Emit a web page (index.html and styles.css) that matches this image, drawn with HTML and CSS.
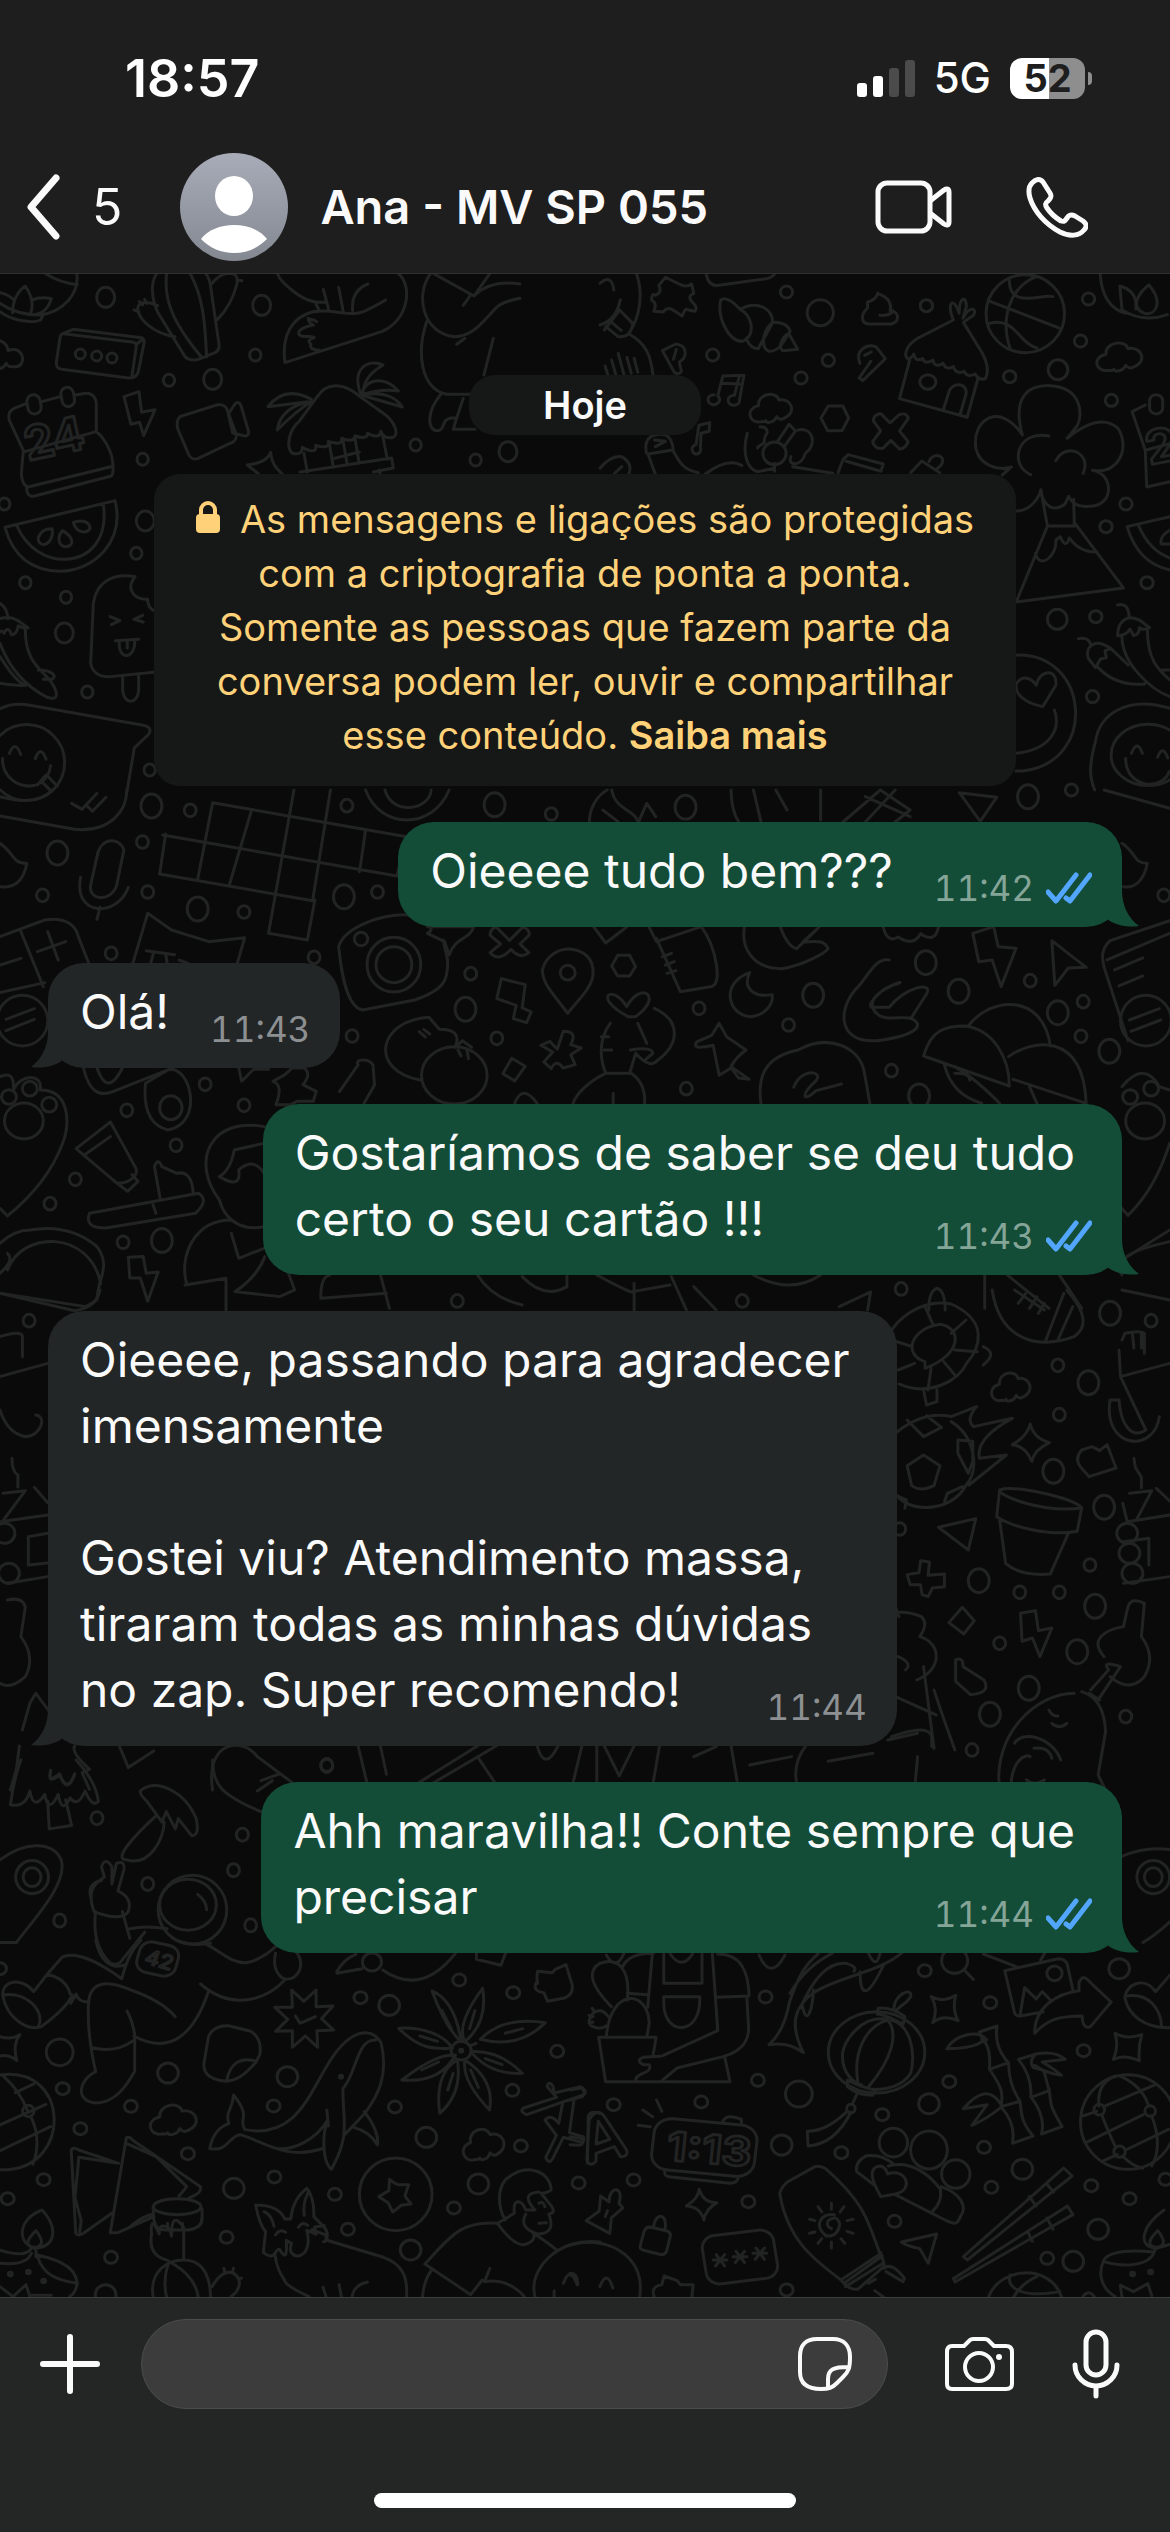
FILE: index.html
```html
<!DOCTYPE html>
<html lang="pt-BR">
<head>
<meta charset="utf-8">
<meta name="viewport" content="width=device-width, initial-scale=1">
<title>Ana - MV SP 055</title>
<link rel="stylesheet" href="styles.css">
</head>
<body>
<header class="top">
  <div class="status">
    <time class="clock">18:57</time>
    <div class="status-icons">
      <svg class="signal" width="58" height="37" viewBox="0 0 58 37" aria-hidden="true">
        <rect x="0" y="23" width="10" height="14" rx="3" fill="#fff"/>
        <rect x="16" y="16" width="10" height="21" rx="3" fill="#fff"/>
        <rect x="32" y="8" width="10" height="29" rx="3" fill="#4b4b4b"/>
        <rect x="48" y="0" width="10" height="37" rx="3" fill="#4b4b4b"/>
      </svg>
      <span class="network">5G</span>
      <span class="battery"><span class="battery-level">52</span></span>
    </div>
  </div>
  <nav class="chat-bar">
    <a class="back" href="#chats" aria-label="Voltar">
      <svg width="34" height="66" viewBox="0 0 34 66" aria-hidden="true"><path d="M30 4 5 33l25 29" fill="none" stroke="#fafafa" stroke-width="7" stroke-linecap="round" stroke-linejoin="round"/></svg>
      <span class="unread">5</span>
    </a>
    <a class="contact" href="#contact">
      <svg class="avatar" width="108" height="108" viewBox="0 0 108 108" aria-hidden="true">
        <defs><linearGradient id="av" x1="0" y1="0" x2="0" y2="1"><stop offset="0" stop-color="#a8acb8"/><stop offset="1" stop-color="#848891"/></linearGradient></defs>
        <circle cx="54" cy="54" r="54" fill="url(#av)"/>
        <ellipse cx="54" cy="43" rx="19" ry="20" fill="#fff"/>
        <path d="M21 86C28 77 40 72 54 72s26 5 33 14c-9 9-20 14-33 14S30 95 21 86z" fill="#fff"/>
      </svg>
      <h1 class="contact-name">Ana - MV SP 055</h1>
    </a>
    <div class="calls">
      <button class="icon-btn" type="button" aria-label="Chamada de vídeo">
        <svg width="78" height="54" viewBox="0 0 78 54" fill="none" stroke="#fafafa" stroke-width="5" stroke-linejoin="round"><rect x="3" y="3" width="52" height="48" rx="9"/><path d="M55 21 69 10c3-2 5-1 5 2v30c0 3-2 4-5 2L55 33"/></svg>
      </button>
      <button class="icon-btn" type="button" aria-label="Chamada de voz">
        <svg width="62" height="62" viewBox="0 0 62 62" fill="none" stroke="#fafafa" stroke-width="5" stroke-linejoin="round"><path d="M6 7C10 3 14 2 17 6L24 17c2 3 1 5-2 8-3 2-3 4-1 7 4 6 9 10 14 13 3 1 4 0 6-3 2-3 4-4 8-2l8 5c4 3 4 6 1 9-5 6-14 7-24 2C19 48 8 35 4 22 2 15 3 10 6 7z"/></svg>
      </button>
    </div>
  </nav>
</header>

<main class="chat">
  <svg class="doodles" viewBox="0 274 1170 2023" preserveAspectRatio="xMidYMin slice" aria-hidden="true">
    <defs>
      <ellipse id="s" rx="17" ry="18"/>
      <ellipse id="l" rx="27" ry="30"/>
      <ellipse id="m" rx="8" ry="19"/>
      <ellipse id="n" rx="14" ry="36"/>
      <path id="bolt" d="M0 15 45 0l8 62 40-8-34 78-12-40-26 6z"/>
      <path id="cloud" d="M32 93c-30 8-45-38-6-48C22 10 74-2 82 28c35-8 52 40 12 56-5 5-15 0-18-6-8 20-28 20-30 12 0 2-6 4-14 3z"/>
    </defs>
    <g transform="translate(0 270) scale(.3333)">
      <use href="#l" x="317" y="82"/><use href="#l" x="785" y="106"/><use href="#l" x="638" y="328"/><use href="#l" x="436" y="753"/><use href="#l" x="193" y="1089"/><use href="#l" x="1524" y="545"/>
      <use href="#s" x="507" y="331"/><use href="#s" x="766" y="255"/><use href="#s" x="428" y="568"/><use href="#s" x="13" y="702"/><use href="#s" x="409" y="850"/><use href="#s" x="76" y="938"/><use href="#s" x="198" y="982"/><use href="#s" x="262" y="1266"/><use href="#s" x="449" y="1500"/><use href="#s" x="1247" y="525"/><use href="#s" x="1427" y="570"/>
      <path d="M230 10c10 60-40 115-110 125q-70 0-120-35M0 125c40 30 100 35 122 25l8-16M135 10c30 20 60 30 97 34M38 128c0-30 10-60 38-80 20 30 25 60 15 85M0 68q25 5 40 20M96 90c20-8 40-8 58-4-8 30-30 50-60 48"/>
      <path d="M190 190 220 178 425 203c10 5 8 15 6 22l-15 75c-3 20-15 25-30 24L185 298c-14-2-17-12-16-22l11-72c2-12 6-14 16-12l200 24c14 2 14 10 12 20l-12 82M410 222l18-14"/>
      <circle cx="241" cy="252" r="15"/><circle cx="290" cy="258" r="15"/><circle cx="336" cy="264" r="15"/>
      <path d="M0 212q22 8 24 30c50-20 60 55 15 48-10 2-20-4-20-10q-6 12-19 16"/>
      <path d="M470 10c-20 30-15 80 5 120l80 130c10 10 25 12 40 8l50-20c10-5 14-12 12-26L632 50q-3-25-15-40M500 10c-10 80 20 150 105 252M570 10c45 80 45 170 50 250M635 42q20-28 50-32c25 0 30 12 25 35-10 40-35 80-58 104M525 200c-60-8-110-50-112-85 4-22 30-22 60-8M402 120l14 6M418 95l10 10M434 88l6 12M714 30l12 2"/>
      <path d="M832 10q5 15 18 27c30 30 70 60 110 60h18M1195 10c45 40 30 140-50 175L855 278c-15-110 50-155 110-155 60 0 100 20 140-5 30-15 40-20 52-28M970 58l16 60M1016 52l14 74M1058 122c-4-50 20-70 46-80M948 102l10 20M950 155c-10-8-20-5-25-10M925 145c0 10 5 15 15 20-25 5-50 15-42 30 15 10 30 0 45 8-15 5-22 10-10 20-5 10 5 18 25 18"/>
      <path d="M1292 10c-50 70-20 180 70 190 60 0 90-50 130-90 20-15 40-20 68-25M1300 10l122 68 48-68M1422 78q50-50 138-36M1410 78l-20 28M1395 205l-25 18M1280 155c-30 90-20 200 60 218h90M1480 205l-28 110M1325 370c-50 60-40 110-15 112 30 0 10-35 45-38h15l-10 34h65l-25 0M1390 385l-22 66"/>
      <path d="M1000 348c30-5 55 10 80 32l70 50c30 20 50 60 30 72-20 5-35-5-37-18q0 25-40 6 0 20-38 8 0 20-40 8 5 22-40 8 5 25-38 12 5 30-40 6 0 25-30 18c-20-20-10-70 20-95l55-75q20-30 48-32zM912 550l10 56M988 520l12 72M1028 505l14 80M1064 500l14 80M1148 496l14 72M1000 566l78-20M900 606l275-42 5 30-60 12M1138 600l2 12M804 410q50-65 130-22M804 410l132-16M832 480q10-70 104-86M832 480q60-60 104-86M1083 375c-30-80 20-110 66-90-50 30-60 60-60 90M1083 375c20-60 80-50 112-12M1083 375q60-20 112-12M1083 375c60-10 100 0 124 36M1083 375l124 36M742 585c40-5 60-15 70-38 5 40 20 50 35 65M742 585l34 27"/>
      <path d="M80 400 42 415c-14 8-18 22-14 36l42 90-6 70q2 35 20 40l255-62c0-45-30-90-50-104v-80c0-25-15-36-32-35l-30 5M125 395l56-15M74 545l214-60M80 650q0 35 24 28l230-60q8-10 4-30"/>
      <rect x="82" y="374" width="40" height="58" rx="20" transform="rotate(-10 102 403)"/><rect x="184" y="352" width="38" height="58" rx="19" transform="rotate(-10 203 380)"/>
      <text x="84" y="572" font-size="140" transform="rotate(-12 84 572)">24</text>
      <use href="#bolt" x="372" y="365"/>
      <path d="M540 440l110-35c16-4 28 4 32 16l26 70c4 15-6 26-20 30l-95 45c-14 4-24-4-28-15l-32-75q-5-25 7-36zM685 432l20-30c8-8 14-4 18 5l22 75c4 12-6 18-15 15l-32-8z"/>
      <path d="M15 772 345 692c30 120-60 210-165 212Q50 900 15 772M50 766c30 70 90 105 150 102 70-5 125-60 110-166M116 800q10-25 40-24c5 20-5 45-25 48-10 0-20-10-15-24zM188 782c-20 20-10 48 8 48 25 0 30-25-8-48zM220 758c20-10 50-5 50 18-10 15-40 15-50-18z"/>
      <path d="M405 920c-60-10-115 10-125 80l-8 180c5 30 30 42 60 40l135-14M405 920c-30 40 0 70 38 68 0 20 8 32 24 36M368 1222v40c5 45 45 40 48 0v-48M330 1040l30 12-26 12M428 1036l-26 12 28 8M346 1112l70-4M358 1114c-5 60 50 55 46-4M382 1114v20"/>
      <path d="M0 1000q22 15 24 46M0 1046c40-12 60 10 84 28-15 6-20-6-30-6 0 18-12 28-20 26-6-20-15-20-22-4-4-8-8-8-12-4M76 1080c0 110 60 120 85 168 20 40 0 40-20 34C80 1250 30 1200 0 1120M0 1160q50 80 78 86-30 2-78-6M115 1200c40 0 60 20 40 28h-25"/>
      <path d="M0 1316q40-20 90-10l340 60c20 4 25 15 15 28l-42 40-22 130"/><circle cx="80" cy="1478" r="114"/><path d="M28 1450q18-42 34 4M106 1466q16-44 32 2M8 1465c-5 90 130 120 144 22M112 1545l24-28M125 1535l30 30M140 1515l32 34"/>
    </g>
    <g transform="translate(600 270) scale(.3635 .3333)">
      <use href="#l" x="1260" y="299"/><use href="#l" x="1258" y="1048"/><ellipse cx="606" cy="128" rx="36" ry="39"/>
      <use href="#s" x="513" y="66"/><use href="#s" x="898" y="107"/><use href="#s" x="310" y="255"/><use href="#s" x="628" y="271"/><use href="#s" x="553" y="324"/><use href="#s" x="1344" y="87"/><use href="#s" x="1322" y="213"/><use href="#s" x="1127" y="320"/><use href="#s" x="1407" y="391"/><use href="#s" x="1447" y="702"/><use href="#s" x="1392" y="770"/><use href="#s" x="1505" y="938"/><use href="#s" x="1364" y="1040"/><use href="#s" x="1355" y="1280"/><use href="#s" x="1297" y="1560"/>
      <path d="M100 10c20 60 10 130-20 180M0 40q32-30 38 20M0 165q45-15 56-76M12 180l42-60M54 120l36 40q-5 45-40 40l-34-30M30 155l28 26M80 192c50 30 60 70 66 124M14 288l8 28M32 270l12 46M50 250l16 64M74 262l12 48M94 265l10 42"/>
      <path d="M180 22 218 42q20 12 34 0l6 28q-18 8-6 24 20 20 8 30l-24-6q-6 6-10 20l-22-16q-20-14-30 4l-26-2q10-25-6-34 0-22 10-14 20-8 10-30zM292 10q5 40 35 36l130-20q20-4 24-16"/>
      <path d="M385 118Q350 75 332 90c-10 50 20 125 60 124 40-20 25-80-7-96zM385 118c50-30 90 0 90 40l-40 78q-20 0-30-24M475 158c-20 10-40 70-10 86 30 0 40-30 58-60-4-20-30-30-48-26M520 190c-20 10-30 40-18 52l42-4-22-42"/>
      <path d="M172 242 208 222c30 0 36 40 10 54l6 28q-10 14-20 2zM210 238l-8 30M338 318l58-2-12 72a16 15 0 1 1-14-12l14-60M338 318l-14 60a16 15 0 1 1-10-4M336 340l48 2M272 466l30-8-2 26-22 6-2 42a12 14 0 1 1-12-8z"/>
      <path d="M764 70q-5 20-28 26v18c-20 20-18 48 4 48h60c25-4 25-38-2-40q8-35-34-52M770 136q30 2 36-14M715 280c-15-40 20-60 44-50l26 36-62 66-10-8 32-50M728 256l18-10"/>
      <path d="M972 150l-100 56c-30 20-38 50-24 62q15-10 15-16 5 25 25 14 5 20 28 4 5 26 28 10 8 22 28 10 8 25 30 14 8 20 30 8 10 20 28 14 15-30-10-80l-50-88M972 150c-20-50 0-75 16-20 0-50 20-55 20-20l-10 35c20-40 40-30 30-10l-28 22M852 270l-28 116 186 56 30-118M945 418l16-56c10-25 50-25 46 10l-16 60"/><circle cx="902" cy="336" r="22"/>
      <ellipse cx="1170" cy="131" rx="108" ry="117"/><path d="M1073 94l190 80M1200 20c-70 30-100 120-72 216M1126 30c0 90 90 40 120 50M1072 160c70-20 80 60 130 74"/>
      <use href="#cloud" transform="translate(1364 208) scale(1.08 1)"/>
      <path d="M1376 10q5 100 70 120M1430 48q50 15 44 70M1430 48l6 72q60 40 125 14M1510 45c40 50 20 90-10 86-50-20-10-70 10-86"/>
      <path d="M1162 495c-30-120 20-150 76-148 90 5 90 90 75 120l-28 38q90-80 140-30c35 60 0 140-70 126 60 10 60 110-10 108q-40 5-56-30l-10 24q-40 30-62-20l-4-24c-10 40-40 65-68 64M1162 495c-60-100-140-50-128 40 10 50 60 70 98 56l-25 24M1235 498c-90-20-110 90-50 116M1254 572c30-60 100-20 75 38M1213 662l18 106h74l-2-80M1231 768l-86 228 295-42-135-196M1198 850c10 50 60 10 56-40l12-10q16 40 25 4 30 45 76 42"/>
      <use href="#cloud" transform="translate(410 362)"/><ellipse cx="480" cy="550" rx="32" ry="34"/><path d="M488 515l32-52 18 20-32 48M545 480c45-10 50 50 20 70-10 40-50 40-40 10M440 470q20 0 20 18-10 15-8 30-22 15-18 16M405 490c-15 60 0 110 30 115l45-10M480 580v24M530 590l110 20M128 550c-10-50 20-60 50-56 20 8 24 40 22 46l-68 12 20 60M200 540c20 40 30 60 70 68M290 612q60-50 100-26M150 510l30 4-28 16M0 595q30-40 60-35 30 20 20 50M60 590l-20 20"/>
      <path d="M628 408h40l16 36-18 38h-40l-18-38zM762 435q10-8 16 2l20 22 24-24q20-10 26 10l-24 38 24 32q-8 22-24 22l-24-26-22 24q-22 4-28-20l22-32-20-30q2-18 10-18zM655 608l14-40 14-14 96 28-6 22-96-30M855 608l30-35 50 35M905 575c10-30 50-20 34 10l-12 12"/>
      <path d="M1500 405l-36 20 36 116 4 110 64-16M1500 541l68-20"/><rect x="1512" y="374" width="36" height="58" rx="18"/><text x="1512" y="585" font-size="140" transform="rotate(-12 1512 585)">2</text>
      <path d="M1568 740l-118 30q30 110 118 130M1482 768q30 75 86 96M1568 780q-30 20-24 42h24M1424 1005q30-10 32 38M1456 1043c30 0 40 20 56 30q-20 10-28 0 0 20-16 24l-10-20q-10 20-34 20 0-44 32-54M1436 1100c0 80 80 160 132 180M1506 1080c0 90 30 120 62 150M1316 1106q28-6 34 18M1405 1135c-50-35-70 0-62 30l20 28 14-26 16-4-4-20zM1368 1190q50 60 130 52M1405 1135l48 50M1546 1200h22"/>
      <path d="M1144 1155c200-10 230 320 20 348h-20M1145 1450c90-10 125-70 105-130M1218 1310c-50-10-80-40-72-70 20-30 45-10 54 6 10-50 60-50 54 0z"/>
      <path d="M1568 1315c-120-40-195 20-205 100-20 80-15 110-2 145"/><ellipse cx="1508" cy="1455" rx="102" ry="92"/><path d="M1462 1450q16-44 30 0M1534 1462q14-40 28 2M1446 1465c0 90 100 100 120 40"/>
    </g>
    <g transform="translate(0 790) scale(.746 .3333)">
      <use href="#n" x="203" y="48"/><use href="#n" x="77" y="189"/><use href="#n" x="265" y="357"/><use href="#n" x="461" y="320"/><use href="#n" x="663" y="44"/><use href="#n" x="624" y="658"/><use href="#n" x="1241" y="518"/><use href="#n" x="1285" y="604"/><use href="#n" x="1090" y="616"/><use href="#n" x="1418" y="668"/><use href="#n" x="1487" y="784"/><use href="#n" x="1232" y="918"/><use href="#n" x="919" y="52"/><use href="#n" x="1378" y="20"/><use href="#n" x="217" y="1352"/>
      <use href="#m" x="255" y="61"/><use href="#m" x="465" y="47"/><use href="#m" x="191" y="156"/><use href="#m" x="57" y="316"/><use href="#m" x="198" y="306"/><use href="#m" x="327" y="366"/><use href="#m" x="506" y="306"/><use href="#m" x="149" y="490"/><use href="#m" x="421" y="502"/><use href="#m" x="631" y="551"/><use href="#m" x="666" y="745"/><use href="#m" x="472" y="738"/><use href="#m" x="937" y="655"/><use href="#m" x="1057" y="705"/><use href="#m" x="1195" y="842"/><use href="#m" x="920" y="896"/><use href="#m" x="1381" y="572"/><use href="#m" x="1452" y="635"/><use href="#m" x="1449" y="739"/><use href="#m" x="275" y="883"/><use href="#m" x="327" y="946"/><use href="#m" x="170" y="961"/><use href="#m" x="236" y="1066"/><use href="#m" x="101" y="1168"/><use href="#m" x="67" y="1241"/><use href="#m" x="165" y="1357"/><use href="#m" x="739" y="72"/><use href="#m" x="1560" y="316"/><use href="#m" x="613" y="1533"/><use href="#m" x="1208" y="1497"/><use href="#m" x="995" y="1533"/>
      <path d="M0 78l100 40c50 10 70-60 70-118M96 40l14 18 20-48M118 50l6 14 18-42M0 20q50 30 70-20"/>
      <path d="M285 38 545 140 532 258 218 135M222 132l-8 120 205 80 24-332M285 38l-20 230M337 62l-30 226M394 0l-34 430 52 20 10-120M490 120l-8 125"/>
      <path d="M130 200c5-60 30-60 36-20l-10 110c-10 50-40 40-34-10zM108 262c-10 120 50 120 64 30M134 352l-4 36M0 160c20 30 15 60 36 60-5 60-20 75-36 70M1504 160c20 30 15 60 34 60-5 60-20 75-32 70"/>
      <path d="M0 440l60-50c30-10 42 20 45 50l14 80M0 525l28-20M28 425l30 165M50 485l38-30M64 425l14 85M0 608l60-30"/><ellipse cx="30" cy="692" rx="34" ry="76"/><path d="M8 688l38-32M8 722l38-34M1568 392l-80 60c-14 30-10 60-8 80l32 220M1568 430l-84 80M1494 540l38-36M1500 588l32-30"/><ellipse cx="1536" cy="692" rx="34" ry="76"/><path d="M1514 690l40-34M1516 724l40-34"/>
      <path d="M178 520l20-150 32 50 50 35 48-12-10 78M196 482l38 12M206 486l-4 34M222 490l2 30M240 510l12 10M486 660c-25-10-30-150-32-190 8-60 60-100 95-95M486 660l70-30c40-30 45-60 44-120l-6-60"/><ellipse cx="528" cy="524" rx="36" ry="82"/><ellipse cx="528" cy="524" rx="24" ry="54"/><ellipse cx="484" cy="447" rx="9" ry="20"/>
      <path d="M490 0c20 120 90 120 112 0M516 0c10 80 60 60 62 0M790 96c0-40 10-80 24-96M808 60l20 34M820 0c5 60 30 60 34 90M855 100l12-60 12 40M980 0q0 60 10 95M1010 0l10 95M1040 0l15 60M1100 0v90M1130 96l50-96 40 60-20 36M1160 20l60 60M1200 0l-40 96M1286 8l50 14-22 72zM1480 0l88 55"/>
      <path d="M573 430q10-15 0-20h62c-5 40-25 30-33 85l-6-40zM665 411l18 40 18-40q10 10 8 25l-12 26 12 26q-12 22-24-10-16 40-28 10l14-26-14-26q0-20 8-25zM796 411l16 48 28-48M870 411l10 44 60-45c20 60 30 180 12 180l-40 15-32-160M888 500l12-10M892 525l12-10M894 550l12-8M998 411c-5 60 10 125 50 125 30-10 60-50 62-60-5-30-20-20-34-20l22-45M1046 411q10 60 22 65l28-60M1184 411q5 50 20 30 20 30 30-10 20 30 24-20M1304 430l28-20 6 60 24 5-20 115-12-80-18 5zM1410 452l46 80-24 2-18 52z"/>
      <path d="M761 670c-20-60-34-90-34-130 10-90 70-80 68 10 0 40-20 80-34 120z"/><ellipse cx="761" cy="548" rx="10" ry="22"/><path d="M828 496h16l8 34-8 28h-16l-8-30zM672 566l32 18-4 70 12 12-6 32-18-12 4-40-26-20zM1005 548c-40 30-30 130 2 132 20-5 30-40 28-66-25 10-40-20-30-66z"/>
      <path d="M575 682c-70 10-80 160-12 188M575 682l14 36q30 0 22 48M568 718l8 14M562 725l8 16"/><ellipse cx="609" cy="856" rx="44" ry="86"/><path d="M610 772l10-20 12 20M614 780l4 18M626 780l2 26M755 724q20 0 10 40l14 10-14 20 6 30-16 10q-10-30-16 2l-10-20 12-30-16-20 12-12 10 24zM686 805l18 24-14 44-16-22z"/>
      <path d="M842 680c-50-60-20-100-2-30 20-80 50-30 12 30l-10 0M818 700c-20 60-10 130-6 150h32l8-60q20 50 30 20c30-50 30-120-5-155M806 740h10M810 780h10M845 780q30-10 30 10l-10 20M855 700l12 60M812 850c-20 20-40 60-44 92M846 850q20 30 18 92M822 910v32"/>
      <path d="M964 700l10 40 26 40q-15 25-20 50l24 38-14-4-10-30-16 22-8-90q-30 15-22-10l20-20zM1192 510c-20-10-30 60-46 90-25 70-20 160 30 152 70-20 50-60 54-50-10-40-40 0-54-30-30-60 50-110 26-90-20 10-40 60-34 70l24 0c20-60 60-80 50-40l-20 70"/>
      <path d="M1020 940c-5-80 5-140 50-160 40-50 80-10 88 60l8 100M1064 892c10-60 40-50 30-20-20 40-20 70 0 30l34-20M1238 798c10-80 30-90 55-90 40 10 60 100 60 180zM1298 708c30-90 100-100 110 60M1352 800c30-50 100-80 104 140l-98-72M1266 825q10 90 50 115M1280 830q30 40 60 110M1300 870q0-20-20-20M1380 890l10 50"/>
      <path d="M0 860q20-20 18 40c10-50 40-50 36 0 40 0 40 100 30 160q-20 120-74 218L0 1255"/><ellipse cx="32" cy="993" rx="26" ry="54"/><ellipse cx="12" cy="921" rx="10" ry="22"/><ellipse cx="40" cy="896" rx="10" ry="22"/><ellipse cx="66" cy="944" rx="10" ry="22"/><ellipse cx="1535" cy="993" rx="26" ry="54"/><ellipse cx="1515" cy="921" rx="10" ry="22"/><ellipse cx="1543" cy="896" rx="10" ry="22"/><path d="M1504 890q30-80 50 0l14 10M1568 1060q-20 140-56 216l-8-20"/>
      <path d="M112 834q10 100 40 70l80-70M130 834q14 90 34 0M195 880q-5 120 30 140c50-20 30-200 0-180zM320 834l4 40 16-36 20 0M392 834h16q10 20-2 50l18 20-4 30-22 0-8 10h-20q10-60-4-70l16-20zM455 905l25-80c-5-20 15-20 20 0l2 60-14 55M690 940q10-60 30 0"/><ellipse cx="229" cy="953" rx="15" ry="36"/>
      <path d="M148 996l-46 80 55 104c20 0 30-30 24-50zM148 1040l-35 55M157 1180l14 24 14-30-8-20M207 1130l8 100M207 1130q5-30 10 0l20 20q20-10 22 60M120 1270l146-60q15 20-4 60l-120 44q-30 0-22-44M205 1244l4 26M354 1010c-70-30-100 100-60 220 10 80 40 90 60 80M354 1060l-40 20q-5 60-20 80 30 40 26-20 20-40 34 10M250 1480c-10-80 10-190 60-190M248 1485l55-20v95M310 1330l10 75 34-30M355 1400q-10 60-40 105l60 15 20-20-10-60"/>
      <path d="M0 1360q20-40 40-40c50-20 80 30 90 50 20 60 0 100 0 160l-15 20L0 1510M10 1440c20-120 110-120 125 40M0 1450q20-40 10-60M172 1402l20-2 4 50 16-4-14 88-10-70-14 0zM430 1520q0-60 12-65M430 1525l88-15M510 1455l12 100"/>
      <path d="M640 1455q20 70 60 90M700 1460q30 70 60 30l0-30M800 1455q50 60 48 50l50-20M850 1480l0 80M900 1460l20 100M930 1490l30 70M1010 1455q50 60 90 0M1125 1550l42-44-4 54M1245 1560q0-60 12-65 10 10 10 65M1320 1455v100M1350 1455l56 100M1420 1455l30 100M1504 1410l64-90M1504 1455q-20-60 64-100"/>
    </g>
    <g transform="translate(0 1290) scale(.746 .3333)">
      <use href="#m" x="39" y="92"/><use href="#n" x="1488" y="70"/><use href="#m" x="1543" y="92"/><use href="#m" x="1418" y="226"/><use href="#n" x="1459" y="278"/><use href="#m" x="1420" y="374"/><use href="#n" x="1412" y="544"/><use href="#m" x="1206" y="717"/><use href="#n" x="1480" y="652"/><use href="#n" x="1312" y="872"/><use href="#m" x="1461" y="825"/><use href="#m" x="1367" y="907"/><use href="#m" x="1420" y="907"/><use href="#n" x="1468" y="949"/><use href="#m" x="1340" y="1060"/><use href="#n" x="1444" y="1085"/><use href="#n" x="1379" y="1195"/><use href="#n" x="1327" y="1273"/><use href="#m" x="1509" y="1280"/><use href="#m" x="1303" y="1380"/><use href="#m" x="438" y="1425"/>
      <path d="M1195 120c20-60 50-90 80-78 50 50 40 130 20 180-10 50-50 100-90 60M1240 215c-30-20-20-100 20-112 30 10 30 90-20 132zM1195 150l28 20M1204 240l22-20M1248 235l-4 65M1265 215l15 40M1280 180l30 5M1275 130l20-40M1250 100l-10-50M1318 170q20 20 0 55M1238 300l4 45 14-10v-35"/>
      <use href="#cloud" transform="translate(1328 238) scale(.45 1)"/>
      <path d="M1330 0c10 150 60 180 110 140 25-40 5-100-10-140M1360 0l40 60M1375 10l-10 30M1390 20l-10 35M1400 40l-8 30M1402 150l24-140M1418 150l20-100"/>
      <path d="M1195 440q40-80 80-60l34-30q-15 40-4 60l52-25q-50 60-44 120l36-10-50 90M1195 585c10 90 80 90 100 0 20-50 10-150-20-190M1238 495l22 32-8 60q-18 20-30 0l-6-60zM1216 390l22 50 24-28-20-35M1284 450l20 4v60l-6 36-14-60zM1195 610l20 20-2 25M1290 590l-20 20-4 25M1381 402q5 45 26 56-20 20-24 56-8-45-26-50 20-25 24-62zM1450 480l14-10 10 12 10-18 12 70-36 26-8-20q-14-30-2-60zM1340 600l-4 80c20 30 70 60 108 44l6-70c-10-30-90-70-110-54 0 20 60 70 110 54M1340 690l8 130q20 40 60 32l24-122M1258 712l50-26-10 94zM1234 812l12 4-2 40 22-4v38l-16 4-6 26-8-6-2-30h-14l-4-30 16-6z"/>
      <path d="M1290 952l16 40-14 40-20-34zM1368 970l20-8 4 60 18-8-16 86-10-56-14 10zM1281 1110c10-10 10 10 10 20l28 40q10 40-18 44l-20-40zM1195 970q20-10 40 10 10 20-2 60c30 20 30 100-4 130M1195 920l10 60M1204 1100q20 20 10 40M1238 1130l14 245M1252 1200l12 80 16 100M1195 1215l60 60M1195 1340q50-40 54 0v30"/>
      <path d="M1440 1210c-50 0-110 120-100 290M1450 1205q30 20 32 120l-10 130 10 45M1360 1360c10-40 50-20 62 50M1355 1500c0-90 20-110 26-100M1386 1375q20-5 24 30M1376 1470q10 20 24 0M1406 1260q5 20 12 18M1410 1300q10 20 20 0M1460 1210l14 20M1462 1200l24-60q-10-30 16-10l-30 100M1480 1100c-20-50 0-80 26-90l6-60q5-30 22-10l-4 100q20 60 4 120-20 50-46 0"/>
      <path d="M1504 0l64 30M1504 150l4-20q20-10 26 0v60M1500 180l2 80 34 160c-20 30-34-20-36-90h-12c-10 150 60 160 66 50M1502 260l66-40M1518 130l2 44M1530 130v44M1520 505l2 28 8 28v32M1514 610l30-8-20 85M1505 640l6 55 57-20M1550 595l18 38M1506 755l34-10v80M1506 880l62-20"/><ellipse cx="1511" cy="730" rx="14" ry="30"/><ellipse cx="1514" cy="790" rx="14" ry="30"/><ellipse cx="1518" cy="850" rx="14" ry="30"/>
      <path d="M0 10l100 52q30-10 34-62M0 140q30-20 30 0v60M0 260l64-40M0 360q10 70 34 80c20 0 30-60 14-65M16 505q0 40 8 50v36M4 610l30-8-30 90M0 695l64-20M46 592l18 46M38 825V740l26-10M38 825l26-6M10 880l54-20"/><ellipse cx="6" cy="730" rx="14" ry="30"/><ellipse cx="12" cy="850" rx="14" ry="30"/><path d="M10 930q20-10 24 20l-6 90q20 60 6 120-20 40-34 20M40 1240l8-30 20 60M40 1240l-10 80M26 1368l-4 70-8 62M100 1368q-5 20 20 70l-10 10 10 50M68 1445q-5 40 12 10 10 60 20 0M160 1368l12 65 34-50M285 1500c-10-150 40-160 60-100l60 100M480 1368l14 130M510 1368l8 85M560 1480l80-112M580 1480l85-112M720 1368q10 80 28 0M640 1400l30 100M780 1368l-14 130M800 1368v130M810 1368l20 90 20-90M884 1368l-10 130M930 1400l30-30M980 1368l10 130M1005 1425l56-25M1080 1368q-20 60-10 130M1110 1414l60-24M1230 1330l-40 20M1230 1400l-4 100"/>
    </g>
    <g transform="translate(0 1760) scale(.746 .3444)">
      <use href="#m" x="438" y="17"/><use href="#m" x="130" y="169"/><use href="#m" x="325" y="217"/><use href="#m" x="313" y="320"/><use href="#m" x="198" y="360"/><use href="#m" x="80" y="466"/><use href="#m" x="336" y="480"/>
      <path d="M28 0q-10 60-14 130 20 10 26-40 5 60 20 10 5 60 18 0 5 60 16 10 10 30 20-20 10 50 18 30-4-60-30-120M64 120l2 80 30-10-8-75M68 30q-5 40 12 10 10 60 20 0M188 90c20-40 60 0 75 80q5 50-6 50l-18-50-4 30-12-50-6 30-20-60q-10-20-9-30M210 160c-30 60-60 130-40 130 30 20 50-60 50-110M285 0c0 70 10 100 65 150M350 60l25-20M345 90l20-30M0 290c30-50 70-60 82 0 10 70-40 180-60 240l-22 0"/><ellipse cx="43" cy="340" rx="22" ry="48"/><ellipse cx="43" cy="340" rx="12" ry="27"/>
      <path d="M126 440c-10-60 0-80 14-100l-4-30q5-30 14 0v50l6-60q12-10 10 20l-8 60q20 20 14 60-10 30-46 0zM136 350q-20 10-14 50M128 440q-5 100 20 150 10 10 16-10l30-80M164 440l10 78M174 490q20-10 50 0"/><ellipse cx="258" cy="435" rx="46" ry="100"/><ellipse cx="252" cy="420" rx="38" ry="74"/><path d="M265 390q12 20 12 45M1504 280q30-30 64-20M1568 470q-20 40-36 60"/><ellipse cx="1546" cy="340" rx="22" ry="48"/><ellipse cx="1546" cy="340" rx="12" ry="27"/>
    </g>
    <g transform="translate(0 1940) scale(.3827 .3333)">
      <use href="#l" x="439" y="399"/><use href="#l" x="751" y="410"/><use href="#l" x="1017" y="196"/><use href="#l" x="1114" y="592"/><use href="#l" x="611" y="745"/><use href="#l" x="1250" y="732"/><use href="#l" x="1073" y="930"/><use href="#l" x="276" y="1064"/><ellipse cx="156" cy="337" rx="35" ry="40"/>
      <use href="#s" x="0" y="86"/><use href="#s" x="942" y="173"/><use href="#s" x="1200" y="120"/><use href="#s" x="1341" y="158"/><use href="#s" x="1456" y="334"/><use href="#s" x="1339" y="451"/><use href="#s" x="1361" y="618"/><use href="#s" x="164" y="446"/><use href="#s" x="342" y="499"/><use href="#s" x="210" y="566"/><use href="#s" x="491" y="641"/><use href="#s" x="715" y="498"/><use href="#s" x="1032" y="501"/><use href="#s" x="717" y="711"/><use href="#s" x="875" y="763"/><use href="#s" x="909" y="868"/><use href="#s" x="592" y="892"/><use href="#s" x="290" y="952"/><use href="#s" x="114" y="719"/><use href="#s" x="20" y="776"/><use href="#s" x="1186" y="804"/><use href="#s" x="1512" y="729"/>
      <path d="M88 155C60 110 0 120 8 170c10 60 60 105 100 90q70-60 80-95l-5-4q-10-45-60-58l40-52c40-20 100 20 155 65 10-40 20-80 50-115M88 155l35-52M10 165c60-10 110 50 90 95M185 190l14-28q5 25 34 24M250 0c10 60 40 90 75 75M232 180c10-70 70-50 110-30 50 20 90 45 116 80M232 180c-5 70 5 150 18 215-50 30-50 90 0 94 50 0 80-50 102-95V285q-5-40-20-72M240 322q60 20 108-20M350 288c80 50 150 20 195-135M524 132c80 80 170 50 220-12M535 10c50 30 70 60 110 58q40-10 75-48M720 40c-10 50 15 95 50 70 20-20 20-50 5-72M460 0q40 20 90 10"/>
      <rect x="360" y="10" width="104" height="94" rx="32" transform="rotate(14 412 57)"/><text x="374" y="68" font-size="60" transform="rotate(18 374 68)" class="tiny">42</text>
      <path d="M0 290q30 10 52-6-20 30-8 78-20-20-44-14M0 405c180-30 190 270 20 284H0M0 555l120-62M0 632l132-72M40 458l48-26M10 410q40 40 62 102M80 528q30 70 6 145"/><ellipse cx="74" cy="513" rx="15" ry="17"/>
      <path d="M762 150l32 34 32-34v50l44-2-30 38 32 34-44 2 2 50-32-34-34 34v-50l-44 2 32-36-34-36 46 0zM772 228l12 22 40-20M600 258l55 16q30 20 24 70l-10 22c-30 40-50 55-78 58-50-5-60-30-58-55l12-80q15-35 55-31zM592 422q15-80 78-58"/>
      <path d="M1205 305q-40-40-76-152 60 30 76 152zM1215 305q-25-50 46-160 15 100-46 160zM1182 325c-40 0-80 10-140-60 60-5 120 20 140 60zM1190 345q-50-5-140 75 100 10 140-75zM1195 360q-60 40-46 160 60-60 46-160zM1215 360q-10 60 64 150 15-90-64-150zM1230 335q50 70 135 65-60-70-135-65zM1255 298q60-70 170-50-70 80-170 50zM1155 212l24 54M1241 212l-14 54M1097 288l46 16M1102 390l44-24M1184 400l-14 50M1230 390l20 52M1268 356l44 18M1320 280l46-14M1228 318l16-8"/><ellipse cx="1205" cy="332" rx="26" ry="28"/><circle cx="1205" cy="332" r="4"/>
      <path d="M548 626q10-60 50-75c-10-40 10-40 12-86 50 70 10 70 30 104 140 30 170-120 230-220 50-80 100-90 126-40 20 100-10 160-42 210l-54 66M982 300c-50-5-50 100-86 146 0 100 20 140-30 242-30-30-20-150-8-130l-4-48M856 540c-30 60-90 90-130 86M548 626c50 10 50-40 80-42 60 20 120 80 218 40M952 515q40 60 34 100-20-40-60-52"/><circle cx="891" cy="410" r="4"/>
      <use href="#cloud" transform="translate(390 484) scale(1.05)"/><use href="#cloud" transform="translate(1200 562) rotate(-6) scale(.95 1.08)"/>
      <path d="M186 630l12 250q5 10 20 0l74-60M186 630q5-10 20 0l104 40-104-18-10 120 16 70-4 34M330 594l-42 284 20 0 94-48M330 594q8-6 16 6l178 140q4 20-30 34M330 610l78 40 80 90-20 28M340 860q30-30 60-38M400 800l2 40q5 30 30 30h60q35-5 36-34v-30"/><ellipse cx="463" cy="800" rx="62" ry="24"/><path d="M438 850v16M477 850v16M110 810c40 50 40 110-20 115-50-20-40-90 20-115zM94 872q-40 45-4 50 35-5 4-50zM82 925q-15 30-82 6M94 925v25M0 970q70 8 82-30M98 945c80 20 100 50 104 85-60-10-90-30-104-80M202 1030q-5 30-20 40M0 1040l34 30 34-36 10 36M78 1066h56"/><circle cx="27" cy="1002" r="5"/><circle cx="74" cy="996" r="5"/><circle cx="114" cy="1023" r="5"/>
      <path d="M440 962c-40-10-50-40-44-80-5-70 20 0 20 0q0-40 28-14l4 20q0-80 32-25v95M400 1070c-10-80 40-110 80-110 60 0 70 70 70 110M440 970q-15 50-5 100M450 970q60 40 68 100M554 1040c40-80 80-30 70 0-5 20-15 24-20 30M585 985l2 10M610 985l-2 10M625 1016l6-2"/>
      <path d="M668 795q60 0 76 42h16q5-60 42-92 20 30 18 85l26 30q15 20 6 40l150 52c50 20 64 60 60 118M845 905q10 0 6-20l-36-16M668 795q10 60 26 80l-6 62q20 20 30 4 10-20 14-10 20 40 16-30l14 10c-20 50 60 60 40-40l24 12-4-22 26-4M718 940c5 50 20 70 30 90q20 20 60 40M690 815q20 10 26 44M795 826c-5-50 10-60 12-74M720 885q10-20 26-8M780 862q10-20 24-6M844 1042l8 28M886 1034l6 36M920 1070q5-35 40-44"/><ellipse cx="1034" cy="763" rx="95" ry="109"/>
      <path d="M1018 718q10 12 22 16h28l-10 34 16 24-26 4q-10 10-22 20l-12-28-24-18 26-18zM1405 130q-4-20 0-36l38 4 8-10 28-14 16 60q4 30-20 40l-44 10-10-26q-30-5-20-30z"/>
      <path d="M1300 850c-100-10-130 50-190 122l120 92 30-44M1128 990q-20 30-24 80M1300 850q50 80 80 60 20-10 14-30 40 30 60 50M1300 850l44-30c-5-50 20-40 30-10h24q-40-50 10-54M1320 840c-20-40-20-90 0-120 60-60 120-20 120 30q-10 10-26 10l28 40q10 20-8 22 20 60-30 60-50-20-30-60M1408 790q10-10 16 10M1408 850l20-2M1280 985l-14 40q60-10 104 44M1398 1070c-20-80 60-180 170-164M1472 1030q18-54 36 4M1448 1052v18"/>
      <path d="M1430 440c0-20 20-10 16 20l70-20q20 10 10 24l-150 60q-20-10-8-20l86-32zM1470 490l-10 60q-20-30-36-10l30 46-28 66q10 30 24-10l22-50 50 16q10-20-6-20l-28-10 12-100M1535 670l2-140q5-20 30-10M880 95q20-40 50-52M880 100l66-14M1000 90q100 80 190-50M1245 40v18l64 18 12-36"/><ellipse cx="972" cy="66" rx="25" ry="27"/>
    </g>
    <g transform="translate(570 1940) scale(.3827 .3333)">
      <use href="#l" x="553" y="615"/><use href="#l" x="938" y="491"/><use href="#l" x="1182" y="688"/><use href="#l" x="1380" y="868"/><use href="#l" x="1315" y="964"/><use href="#l" x="1435" y="86"/><ellipse cx="598" cy="462" rx="35" ry="39"/>
      <use href="#s" x="511" y="171"/><use href="#s" x="491" y="421"/><use href="#s" x="114" y="494"/><use href="#s" x="343" y="486"/><use href="#s" x="816" y="524"/><use href="#s" x="709" y="638"/><use href="#s" x="166" y="720"/><use href="#s" x="466" y="785"/><use href="#s" x="848" y="844"/><use href="#s" x="927" y="92"/><use href="#s" x="1098" y="188"/><use href="#s" x="991" y="425"/><use href="#s" x="1082" y="622"/><use href="#s" x="1101" y="742"/><use href="#s" x="1342" y="332"/><use href="#s" x="1362" y="737"/><use href="#s" x="1462" y="776"/><use href="#s" x="1247" y="955"/><use href="#s" x="566" y="1050"/><use href="#s" x="1556" y="718"/>
      <path d="M75 292h150l-8 54M75 292l18 133h325l-14-75M95 290c10-150 110-140 112-40l-6 40M108 200c-60-70-60-110-30-130 50-20 80 20 72 110M138 80q15-40 80-40M95 45q25 50 46-5M215 42l-12 160M372 42l14 230-145 76-50 4q-20 10 0 22h16c10 30-36 20-36 50M238 424l42-40 120-34c60-20 70-60 66-100l-4-80M386 42c60 0 80 50 82 126l-86 4M150 160l52 4M245 42v88h100V42M262 42q30 50 58 0M245 170h94c5 120-94 120-94 20zM100 230q-20-30-40-10-20 30 0 40 20 10 34-2M58 205l6 10M50 226l10 4M50 250l10-4"/>
      <path d="M520 314q40-40 54-130c20-60 30-100 74-142M520 314q50-10 90 24c-40-90-20-140 26-180 70-50 170-60 232-120M575 160q40-80 110-120M602 204c30-80 70-140 120-134q30 10 20 24M608 200c10 60 26 10 28-50M758 95c0 80 20 80 62-22M780 40q20 50 30 0M494 45q30 80 68 0"/>
      <ellipse cx="801" cy="337" rx="126" ry="122"/><path d="M805 205c30-5 60 15 70 25l-4 22c-20-10-50-30-68-30zM846 210c0-50 50-70 44-40-10 20-20 20-40 44M725 420q30 20 72 30l-6 16q-40 0-66-26zM830 240c-60-20-120 60-118 110 0 50 30 80 50 85M830 240c-60 20-90 100-78 185M830 240c30 40 10 120-50 200M840 240c60 20 60 120 50 160-20 40-70 50-96 48M750 462l-12 30M620 574q50 0 104-60M734 516q-40 95-112 102l-2-44"/><ellipse cx="734" cy="506" rx="11" ry="13"/>
      <rect x="216" y="545" width="270" height="155" rx="46" transform="rotate(6 350 622)"/><path d="M248 688q-4 20 10 22l160 20q20 0 22-20M398 548q10-30 50-10v14M226 480l14 34M190 510l26 20M178 556l32 4"/><text x="250" y="660" font-size="120" transform="rotate(5 250 660)">1:13</text>
      <path d="M44 660l6-120q20-40 40-10l58 100q5 20-16 20l-16-30-48 20 0 24q-15 20-24-4zM68 612l6-68 30 54zM0 450l28-6q16 10 4 26l-32 10M0 590l30 6q10 15-5 20l-25-2"/>
      <path d="M80 768l22 18c0-50 40-50 26 4l10 14-30 30-4 46-62-38 34-28zM92 830l6-18M212 862l44 12q8 5 6 15l-10 46q-5 12-18 8l-42-12q-12-5-8-16l10-42q5-14 18-11zM218 862c5-50 40-40 30 8M338 748q10 40 46 40-30 20-34 52-10-40-46-42 30-20 34-50z"/>
      <rect x="350" y="878" width="188" height="146" rx="36" transform="rotate(-8 444 951)"/><path d="M374 960h36M382 944l22 34M404 944l-24 34M426 950h36M434 934l22 34M456 934l-24 34M478 940h36M486 924l22 34M508 924l-24 34"/>
      <path d="M640 680q15-5 30 8c100 100 110 160 140 254l-102 78c-70-60-140-120-160-260q5-20 20-34zM708 1020q20 30 44 28l70-70-10-40M716 1030l100-82M720 1040l98-70M820 985q20-20 54 30l-4 10-44-30M780 1030l18-12M683 790v18M683 906v18M648 800l10 16M716 800l-10 16M626 838l14 4M740 838l-16 4M626 880l14-4M740 880l-16-6M648 910l10-14M718 910l-10-14M683 866q-16-8-8-24 22-20 30 10-5 40-36 36-30-30-8-56 10-10 30-8"/>
      <ellipse cx="845" cy="608" rx="37" ry="43"/><ellipse cx="938" cy="630" rx="48" ry="57"/><ellipse cx="1008" cy="702" rx="37" ry="43"/><path d="M795 735l-46-40q-5-30 26-48 40-5 70 25M832 678c60-20 110 30 136 70q5 40-22 68M970 740c50 20 70 60 50 90-10 30-20 20-40 10l-130-76M812 770c-30-60-30-90 0-92q14 5 18 24c50-20 70 50 20 60z"/>
      <path d="M944 170q30 20 64-4-10 40 6 76-40-20-66 6 15-40-4-78zM1424 280q30 20 70 4-10 40-6 78-40-20-68-4 15-40 4-78zM866 906l92-24-22 88-22-44q-40-10-48-20zM1290 684l22 24-274 252-10-10zM1244 730l20 26M1200 770l18 28M1300 798l14 26-308 202-4-10zM1246 834l16 34M1196 874l12 30"/>
      <path d="M985 326q70 0 95-24l-10-26 46-18c-10 70 30 110 30 110l-50 20q5-70-20-90M985 326c20-40 80-60 104-26M1096 386c20 40 40 60 30 114l50-16q-30-50-30-114M1126 500q40 50 30 110l54-22c-30-40-30-60-34-104M1172 358l46-16q-20 20-8 40l28 10 14 60-48 20q5-60-32-114M1204 470q40 60 28 112l54-22c-30-60-30-60-34-114M1218 342q50-10 76 16l-60 8q30 20 50 40-40-5-70-30M1028 506l62-12-40 62q40-20 76-54M1028 506q60-80 96-16"/>
      <path d="M1136 92l140-36q20 0 24 20l14 74M1136 92l26 128q5 10 14 8l60-12M1176 225l12-82 30 34 16-22 24 28M1214 280c0-80 60-120 116-128v-24q10-30 30 0l54 58-54 74q-20 10-22-32c-60 0-90 10-124 52zM1080 42l86 38M1030 90l24 28M1230 60l10-20"/><ellipse cx="1005" cy="62" rx="34" ry="38"/><ellipse cx="1266" cy="100" rx="20" ry="22"/>
      <path d="M1530 155c-30-50-80-20-80 20 10 50 50 90 118 88M1530 155l38-50M1454 168c60-10 90 40 92 92"/><ellipse cx="1458" cy="546" rx="124" ry="142"/><path d="M1340 528l36-14M1394 500l136-66M1348 608l150-84M1390 664l40-20M1452 630l112-62M1426 408q-50 20-44 90M1390 526q20 60 36 96M1436 408q60 30 76 90M1520 528q30 90 0 150M1446 650q20 25 50 35"/><ellipse cx="1383" cy="509" rx="14" ry="16"/><ellipse cx="1516" cy="513" rx="14" ry="16"/><ellipse cx="1436" cy="635" rx="15" ry="17"/>
      <path d="M1552 810c-60 50-70 110-20 115l36-12M1536 872q-40 45-4 50 35-5 4-50zM1395 960q20-35 130-24l8-14M1395 960c-20 50 0 90 30 110M1395 965c60 20 120 10 132-30M1438 1035l4 35M1438 1035l34 20 38-24 10 36"/><circle cx="1470" cy="1002" r="5"/><circle cx="1517" cy="996" r="5"/><path d="M1094 1070c30-90 160-100 190 0M1150 1005c-10 40 30 70 130 50M1160 1070q20-40 60-60M220 1070q-10-30 20-36l6-26 34 14 8 12 34 0-4 40M0 1000q20 0 20 34M78 1040q18-54 34 4M0 915c80-30 200 20 182 155M796 1052l24 20M1340 1070q15-24 30 0"/>
    </g>
  </svg>

  <div class="thread">
    <p class="day">Hoje</p>
    <p class="notice"><svg class="lock" width="24" height="32" viewBox="0 0 24 32" aria-hidden="true"><rect x="0" y="13" width="24" height="19" rx="4" fill="#ffd279"/><path d="M5 15V9a7 7 0 0 1 14 0v6" fill="none" stroke="#ffd279" stroke-width="4"/></svg>As mensagens e ligações são protegidas<br>com a criptografia de ponta a ponta.<br>Somente as pessoas que fazem parte da<br>conversa podem ler, ouvir e compartilhar<br>esse conteúdo. <a href="#saiba-mais">Saiba mais</a></p>

    <article class="bubble sent line">
      <p>Oieeee tudo bem???</p>
      <footer><time>11:42</time><svg class="ticks" width="46" height="32" viewBox="0 0 46 32" aria-label="Lida"><path d="M2 20l8 9L30 3M20 26l4 3L44 3"/></svg></footer>
      <svg class="tail" width="38" height="48" viewBox="0 0 38 48" aria-hidden="true"><path d="M0 0H21V12C21 27 28 40 38 47 26 49 14 46 6 40L0 32z"/></svg>
    </article>
    <article class="bubble received line">
      <p>Olá!</p>
      <footer><time>11:43</time></footer>
      <svg class="tail" width="38" height="48" viewBox="0 0 38 48" aria-hidden="true"><path d="M0 0H21V12C21 27 28 40 38 47 26 49 14 46 6 40L0 32z"/></svg>
    </article>
    <article class="bubble sent">
      <p>Gostaríamos de saber se deu tudo<br>certo o seu cartão !!!</p>
      <footer><time>11:43</time><svg class="ticks" width="46" height="32" viewBox="0 0 46 32" aria-label="Lida"><path d="M2 20l8 9L30 3M20 26l4 3L44 3"/></svg></footer>
      <svg class="tail" width="38" height="48" viewBox="0 0 38 48" aria-hidden="true"><path d="M0 0H21V12C21 27 28 40 38 47 26 49 14 46 6 40L0 32z"/></svg>
    </article>
    <article class="bubble received">
      <p>Oieeee, passando para agradecer<br>imensamente<br><br>Gostei viu? Atendimento massa,<br>tiraram todas as minhas dúvidas<br>no zap. Super recomendo!</p>
      <footer><time>11:44</time></footer>
      <svg class="tail" width="38" height="48" viewBox="0 0 38 48" aria-hidden="true"><path d="M0 0H21V12C21 27 28 40 38 47 26 49 14 46 6 40L0 32z"/></svg>
    </article>
    <article class="bubble sent">
      <p>Ahh maravilha!! Conte sempre que<br>precisar</p>
      <footer><time>11:44</time><svg class="ticks" width="46" height="32" viewBox="0 0 46 32" aria-label="Lida"><path d="M2 20l8 9L30 3M20 26l4 3L44 3"/></svg></footer>
      <svg class="tail" width="38" height="48" viewBox="0 0 38 48" aria-hidden="true"><path d="M0 0H21V12C21 27 28 40 38 47 26 49 14 46 6 40L0 32z"/></svg>
    </article>
  </div>
</main>

<form class="composer">
  <div class="composer-row">
    <button class="icon-btn" type="button" aria-label="Anexar"><svg width="60" height="60" viewBox="0 0 60 60" fill="none" stroke="#fafafa" stroke-width="6" stroke-linecap="round"><path d="M30 3v54M3 30h54"/></svg></button>
    <div class="field">
      <input type="text" aria-label="Mensagem">
      <button class="icon-btn" type="button" aria-label="Figurinhas"><svg width="56" height="56" viewBox="0 0 56 56" fill="none" stroke="#fafafa" stroke-width="4" stroke-linejoin="round" stroke-linecap="round"><path d="M20 3h16c11 0 17 7 17 18 0 11-1 14-7 20l-6 6c-5 5-8 6-16 6C10 53 3 47 3 36V20C3 9 9 3 20 3zM51 31c-14 0-20 2-20 12v8"/></svg></button>
    </div>
    <button class="icon-btn" type="button" aria-label="Câmera"><svg width="70" height="56" viewBox="0 0 70 56" fill="none" stroke="#fafafa" stroke-width="4" stroke-linejoin="round"><path d="M8 10h12l6-6q1-1 3-1h12q2 0 3 1l6 6h12q6 0 6 6v32q0 5-6 5H8q-5 0-5-5V16q0-6 5-6z"/><circle cx="35" cy="31" r="14"/><circle cx="55" cy="21" r="3" fill="#fafafa" stroke="none"/></svg></button>
    <button class="icon-btn mic" type="button" aria-label="Gravar áudio"><svg width="48" height="70" viewBox="0 0 48 70" fill="none" stroke="#fafafa" stroke-width="5" stroke-linecap="round"><rect x="14" y="3" width="20" height="43" rx="10"/><path d="M3 36a21 21 0 0 0 42 0M24 58v9"/></svg></button>
  </div>
  <div class="home-bar"></div>
</form>
</body>
</html>
```
FILE: styles.css
```css
* { box-sizing: border-box; }

body {
  margin: 0;
  min-height: 100vh;
  display: flex;
  flex-direction: column;
  background: #0a0a0a;
  color: #fafafa;
  font-family: Inter, "Liberation Sans", sans-serif;
}

h1, p { margin: 0; }
a { color: inherit; text-decoration: none; }
svg { display: block; flex: none; }

.icon-btn {
  padding: 0;
  border: 0;
  background: none;
  flex: none;
}

/* Header */
.top {
  background: #1e1e1e;
  border-bottom: 1px solid #303030;
}

.status {
  display: flex;
  justify-content: space-between;
  align-items: center;
  height: 156px;
  padding: 0 78px 0 125px;
}

.clock {
  font-size: 52px;
  font-weight: 600;
  color: #fff;
}

.status-icons { display: flex; align-items: center; }

.network {
  margin: 0 19px;
  font-size: 42px;
  line-height: 48px;
  font-weight: 500;
  color: #fff;
}

.battery {
  display: flex;
  align-items: center;
  gap: 3px;
}

.battery-level {
  width: 75px;
  height: 41px;
  border-radius: 12px;
  background: linear-gradient(90deg, #fff 39px, #8e8e8e 39px);
  color: #1e1e1e;
  font-size: 38px;
  line-height: 41px;
  font-weight: 700;
  text-align: center;
}

.battery::after {
  content: "";
  width: 4px;
  height: 13px;
  border-radius: 0 6px 6px 0;
  background: #8e8e8e;
}

.chat-bar {
  display: flex;
  align-items: center;
  height: 117px;
  padding: 0 82px 16px 26px;
}

.back {
  display: flex;
  align-items: center;
  gap: 32px;
}

.unread { font-size: 50px; line-height: 58px; }

.contact {
  display: flex;
  align-items: center;
  flex: 1;
  gap: 32px;
  margin-left: 58px;
}

.contact-name { font-size: 47px; line-height: 58px; font-weight: 600; }

.calls { display: flex; align-items: center; gap: 73px; }

/* Conversation */
.chat {
  position: relative;
  flex: 1;
  overflow: hidden;
}

.doodles {
  position: absolute;
  inset: 0;
  width: 100%;
  height: 100%;
  fill: none;
  stroke: #222323;
  stroke-width: 3px;
  stroke-linecap: round;
  stroke-linejoin: round;
  font-family: Inter, sans-serif;
  font-weight: 700;
}

.doodles * { vector-effect: non-scaling-stroke; }
.doodles .tiny { stroke-width: 2px; font-weight: 400; }

.thread {
  position: relative;
  display: flex;
  flex-direction: column;
  gap: 36px;
  padding: 101px 48px 36px;
}

.day {
  align-self: center;
  width: 232px;
  margin-bottom: 3px;
  border-radius: 26px;
  background: #161817;
  font-size: 38px;
  line-height: 60px;
  font-weight: 600;
  text-align: center;
}

.notice {
  align-self: center;
  width: 862px;
  padding: 18px 16px 24px;
  border-radius: 26px;
  background: #161817;
  color: #ffd279;
  font-size: 38px;
  line-height: 54px;
  text-align: center;
}

.notice a { font-weight: 600; }

.lock { display: inline-block; margin-right: 20px; }

.bubble {
  position: relative;
  display: grid;
  padding: 16px 30px 23px 32px;
  border-radius: 36px;
  font-size: 48px;
  line-height: 66px;
}

.bubble p {
  grid-area: 1 / 1;
  padding-right: 17px;
  white-space: nowrap;
}

.bubble footer {
  grid-area: 1 / 1;
  place-self: end;
  display: flex;
  align-items: center;
  gap: 12px;
  height: 32px;
  font-size: 35px;
  line-height: 32px;
  font-variant-numeric: tabular-nums;
  color: #8d9092;
}

.line { display: flex; align-items: flex-end; gap: 24px; }
.line footer { align-self: flex-end; }

.sent { align-self: flex-end; background: #144d37; }
.sent footer { color: #85a598; }
.received { align-self: flex-start; background: #232626; }

.ticks {
  fill: none;
  stroke: #53a6fd;
  stroke-width: 5px;
  stroke-linecap: round;
  stroke-linejoin: round;
}

.tail {
  position: absolute;
  right: -17px;
  bottom: 0;
  fill: #144d37;
}

.received .tail {
  right: auto;
  left: -17px;
  fill: #232626;
  transform: scaleX(-1);
}

/* Composer */
.composer {
  background: #242625;
  border-top: 1px solid #3c3e3d;
}

.composer-row {
  display: flex;
  align-items: center;
  height: 132px;
  padding: 0 50px 0 40px;
}

.field {
  display: flex;
  align-items: center;
  flex: 1;
  min-width: 0;
  height: 90px;
  margin: 0 56px 0 41px;
  padding-right: 34px;
  border: 1px solid #4b4c4c;
  border-radius: 45px;
  background: #3b3c3b;
}

.field input {
  flex: 1;
  min-width: 0;
  width: 0;
  height: 88px;
  padding: 0 40px;
  border: 0;
  outline: 0;
  background: none;
  color: #fafafa;
  font: inherit;
  font-size: 48px;
}

.mic { margin-left: 58px; }

.home-bar {
  width: 36%;
  height: 15px;
  margin: 63px auto 24px;
  border-radius: 8px;
  background: #fff;
}
```
